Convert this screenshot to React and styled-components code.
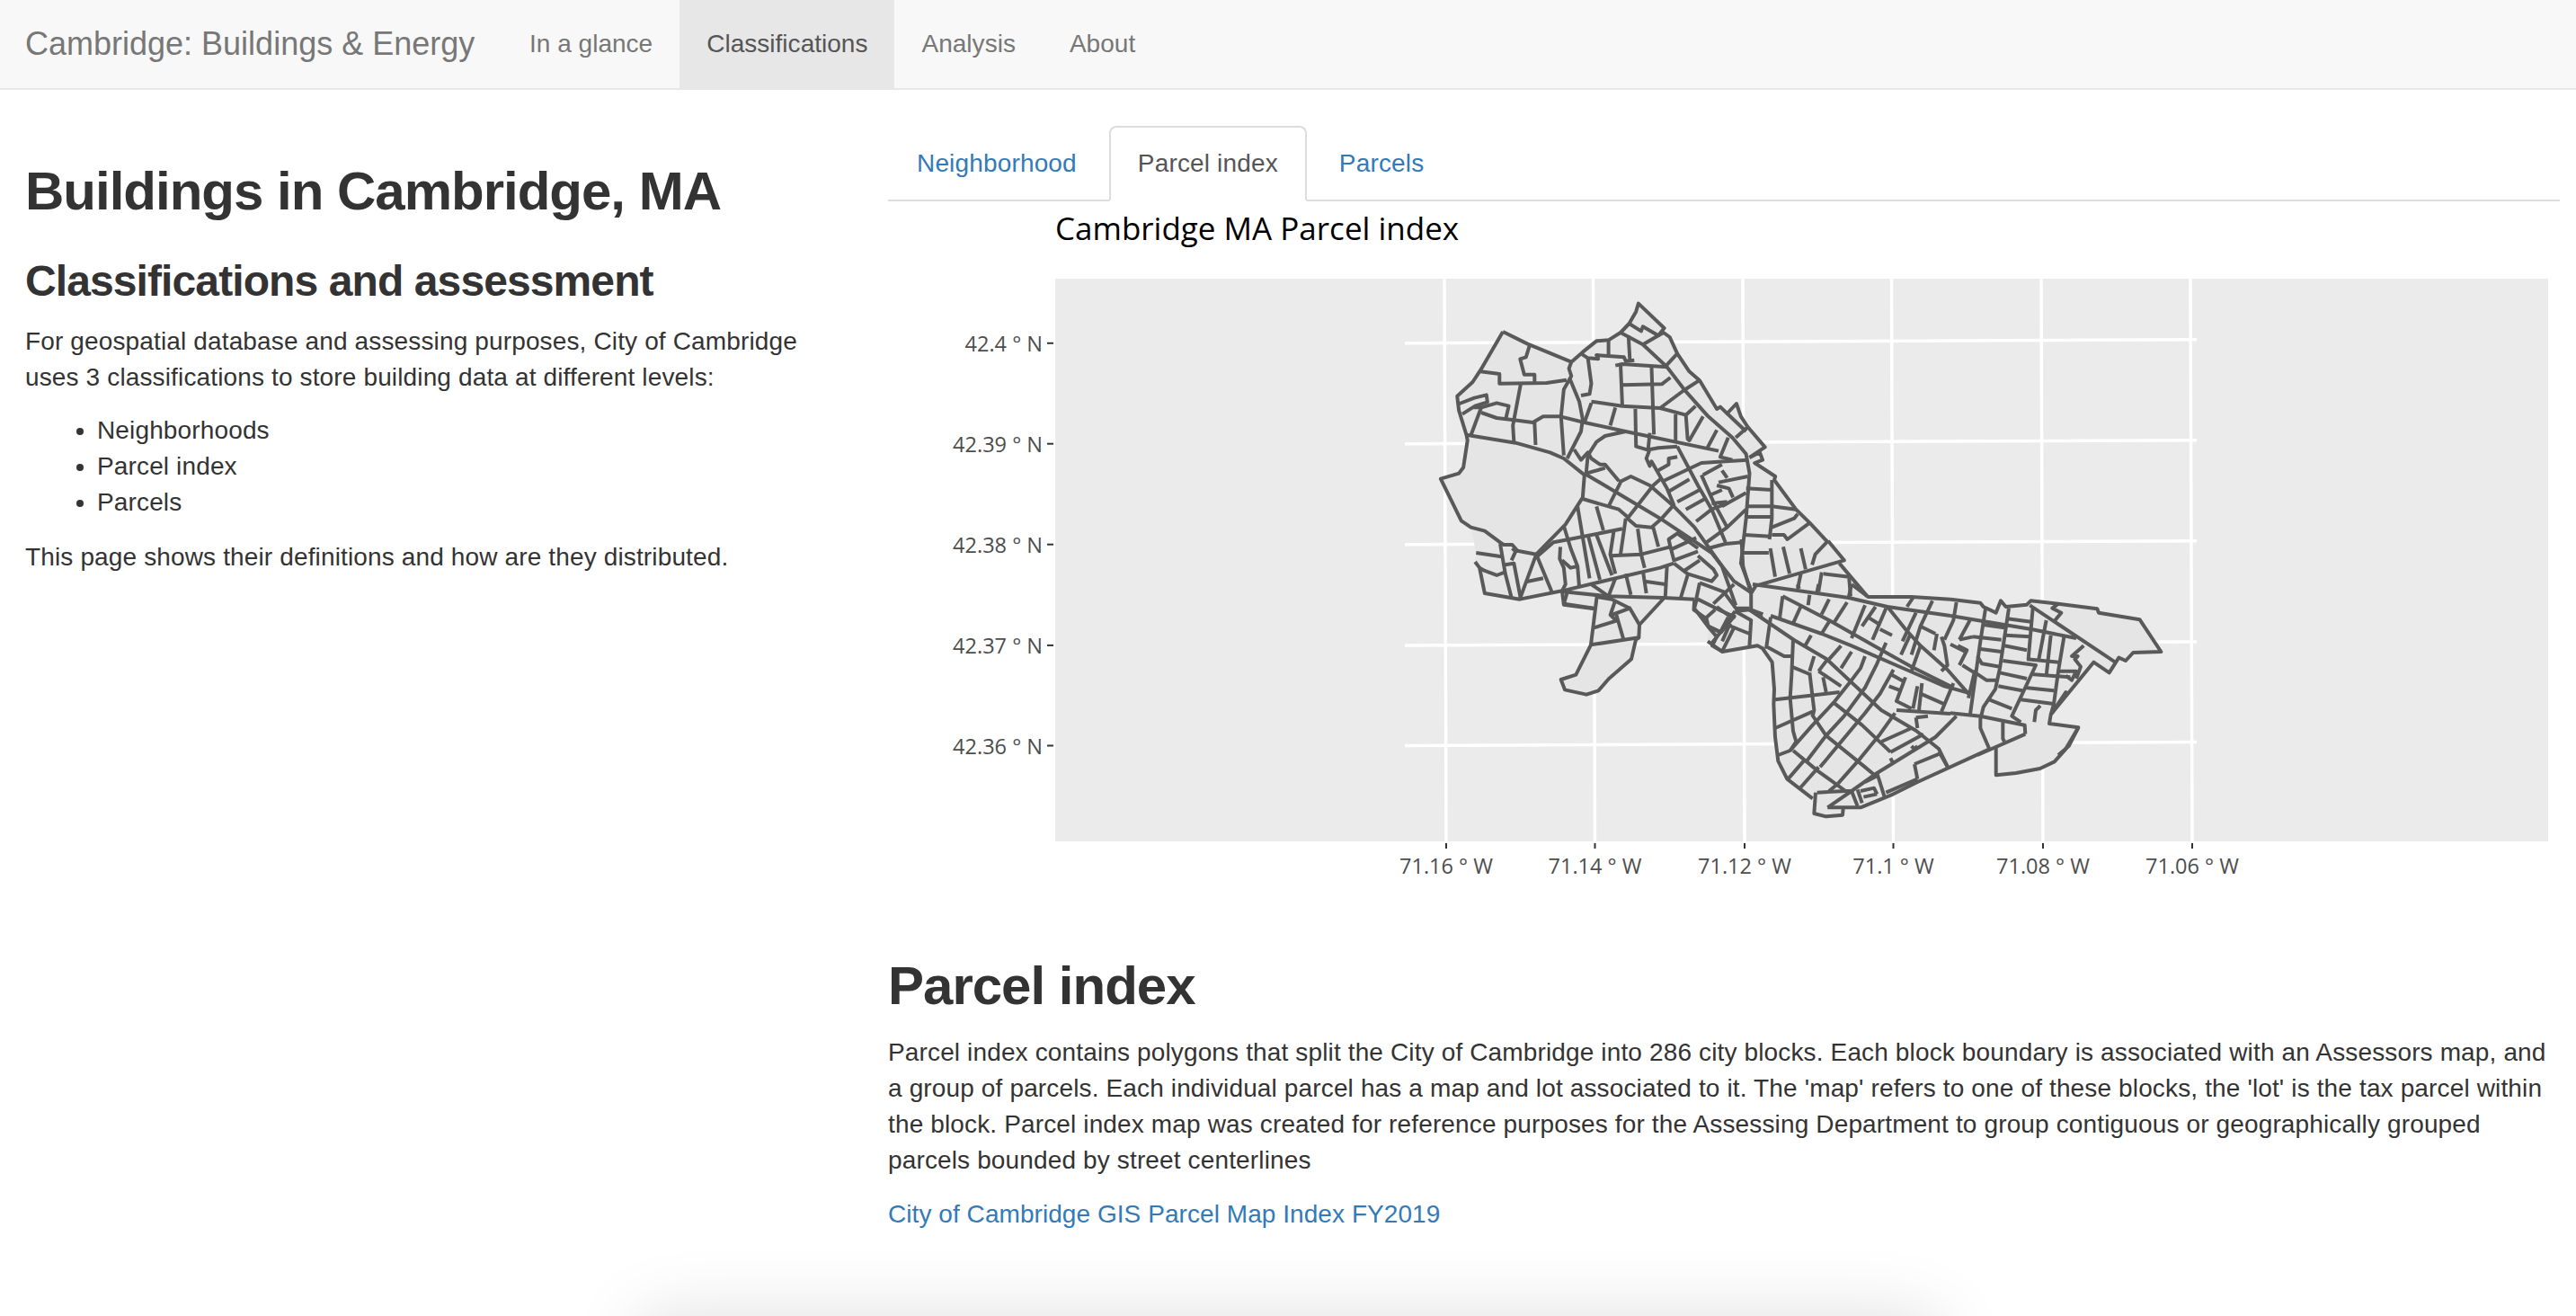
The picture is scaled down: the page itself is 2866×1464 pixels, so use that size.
import React from "react";
import styled, { createGlobalStyle } from "styled-components";

const GlobalStyle = createGlobalStyle`
  html, body {
    margin: 0;
    padding: 0;
    height: 100%;
    overflow: hidden;
    background: #fff;
    color: #333;
    font-family: "Liberation Sans", Arial, sans-serif;
    font-size: 28px;
    line-height: 40px;
    letter-spacing: 0.14px;
  }
  * { box-sizing: border-box; }
`;

const NAV_ITEMS = ["In a glance", "Classifications", "Analysis", "About"];
const TABS = ["Neighborhood", "Parcel index", "Parcels"];
const LAT_TICKS = [["42.4 ° N", 381.8], ["42.39 ° N", 493.7], ["42.38 ° N", 605.7], ["42.37 ° N", 717.9], ["42.36 ° N", 829.5]];
const LON_TICKS = [["71.16 ° W", 1609], ["71.14 ° W", 1774.5], ["71.12 ° W", 1941], ["71.1 ° W", 2106.5], ["71.08 ° W", 2273], ["71.06 ° W", 2439]];

// traced from crops of the map, in crop pixels
const NORTH_FILL =
  "293,177 365,218 492,278 525,245 565,208 600,205 635,180 660,150 680,110 687,83 762,165 745,190 760,180 778,195 800,250 835,310 865,340 915,435 925,428 945,450 972,417 985,460 1005,495 1055,562 1010,597 1040,580 1048,605 1025,615 1085,660 1082,672 1145,770 1185,815 1238,880 1288,938 1268,950 1352,1062 1490,1062 1568,1070 1568,1200 948,1200 925,1180 890,1160 885,1135 848,1105 850,1070 760,1065 690,1150 690,1200 555,1200 560,1102 470,1088 465,1042 342,1070 240,1050 225,965 212,945 215,915 200,830 172,808 112,668 165,650 178,630 190,540 187,522 165,440 160,392 205,345 228,305";
const NORTH_LINES = [
  "293,177 365,218 492,278",
  "293,177 228,305 205,345 160,392 165,440 187,522 190,540 178,630 165,650 112,668 172,808 200,830 240,842 285,880 295,888 320,888 335,908 390,920",
  "492,278 525,245 565,208 600,205 635,180 660,150 680,110 687,83 762,165 745,190",
  "745,190 760,180 778,195 800,250 835,310 865,340 915,435 925,428 945,450 972,417 985,460 1005,495 1055,562 1010,597",
  "1010,597 1040,580 1048,605 1025,615 1085,660 1082,672 1145,770 1185,815 1238,880",
  "228,310 283,318 283,350 420,348 478,338",
  "370,225 360,262 343,268 355,320 385,320 385,348",
  "345,350 322,490 325,545",
  "160,420 210,398 245,388 248,412 212,425 175,452",
  "207,430 230,430 275,415 310,425 302,465",
  "230,430 200,522",
  "230,447 275,465 325,472 380,480 410,460 460,460",
  "190,522 330,548 430,580 470,600 530,655 525,730 475,820 390,920",
  "385,480 388,555",
  "492,278 485,300 492,325 470,370 462,460 470,590",
  "488,335 515,410 525,470 520,510 480,600",
  "460,460 530,480 650,510 920,575",
  "520,250 540,265 570,268 565,255 645,262 650,275 675,272",
  "540,265 550,350 545,385 520,390",
  "600,205 600,255",
  "658,190 662,270",
  "635,180 700,220 770,295 820,370 890,460 960,530 1000,585 1010,650 1000,800 985,950 1018,1050",
  "620,290 640,285 770,295",
  "635,285 640,420",
  "725,290 732,520",
  "640,355 755,352 780,330",
  "550,410 640,425 750,432 825,455",
  "800,250 768,290",
  "863,340 820,372 750,432",
  "853,425 825,455 830,535 835,540 875,460",
  "620,430 605,490",
  "550,415 530,480",
  "678,435 680,560 715,572 720,515",
  "795,452 795,548",
  "915,505 885,570",
  "948,530 925,595 960,605",
  "945,450 1000,510",
  "1003,497 970,530",
  "660,150 695,175 700,160 730,180 745,190 700,220",
  "650,510 590,525 565,545 540,590 535,650",
  "500,570 520,605 540,580 550,600 575,620 590,620 630,675",
  "535,650 590,632",
  "530,650 750,800 900,915 965,1010 1018,1050",
  "635,680 600,760",
  "525,735 600,760 630,770 655,795",
  "630,680 665,660 720,690 790,760 850,830 930,960 970,1090",
  "800,560 745,565 720,570 710,600 720,625 725,610 770,700 790,755 755,800 725,830 680,825 655,800 730,690 750,670",
  "800,560 860,690 900,770 940,880",
  "745,640 775,620 775,600 800,595",
  "760,675 870,615 940,610 1005,605",
  "775,710 835,670",
  "800,745 865,705",
  "825,770 880,735",
  "875,655 930,620",
  "930,640 945,665",
  "870,655 905,745 945,830",
  "920,680 1005,660",
  "915,690 950,700 962,730",
  "900,720 930,705",
  "900,750 945,745",
  "930,760 1000,715",
  "855,810 900,770 945,750",
  "885,880 945,830 1000,770",
  "890,900 940,885 990,880",
  "1000,700 1075,705",
  "1005,760 1075,760 1145,770",
  "1000,795 1075,795",
  "995,855 1070,860",
  "1075,672 1075,800 1068,870",
  "1075,830 1140,800 1150,785",
  "1075,855 1110,855 1120,870 1185,815",
  "215,915 290,928",
  "285,885 300,985 318,1065",
  "300,955 325,950 345,1070",
  "320,900 330,910 318,940",
  "225,965 240,975 275,990 298,980",
  "212,945 225,965 240,1050 342,1070 465,1042 470,1088 560,1102",
  "342,1070 390,920 435,1045",
  "360,1012 410,1000",
  "395,925 440,880 485,870 640,835",
  "470,825 490,900 510,960 515,1030",
  "510,760 545,1000",
  "565,760 585,840",
  "540,855 575,1005",
  "565,855 610,990",
  "615,845 605,920 620,985",
  "650,800 635,920",
  "605,925 695,920 780,895 790,940 860,910",
  "685,835 695,920 705,965",
  "730,830 745,895",
  "780,895 775,870 800,850 860,900",
  "780,905 855,865",
  "465,1042 750,965 790,950",
  "460,895 458,935 470,965 475,1020 465,1042",
  "465,940 490,965 510,960",
  "790,950 830,985 900,1010 915,990 905,970 860,925",
  "820,975 865,940",
  "770,960 765,1065",
  "470,1045 600,1060 760,1065 850,1070",
  "550,1020 600,1060",
  "620,1000 600,1060",
  "650,985 665,1055",
  "700,975 710,1050",
  "705,1010 765,1020",
  "830,990 810,1065",
  "865,1015 855,1070",
  "865,1015 935,1045 970,1100 1010,1100",
  "860,1070 930,1110 970,1130",
  "905,1085 965,1020",
  "850,1070 848,1105 885,1135 890,1160 925,1180 948,1130",
  "885,1130 910,1105",
];

const ISLAND_FILL =
  "270,172 220,272 170,288 183,322 255,338 295,325 330,285 405,220 420,155 430,148 432,105 515,15 520,0 180,0 180,35 280,50";
const CORNER_FILL = "625,15 615,50 660,110 690,145 675,175 710,195 800,180 800,0 625,0";
const ISLAND_LINES = [
  "270,172 220,272 170,288 183,322 255,338 295,325 330,285 405,220 420,155",
  "270,172 430,148",
  "280,115 355,92 335,72 350,28",
  "290,10 270,172",
  "380,158 355,72",
  "340,72 400,50 432,105 430,148 420,155",
  "180,35 280,50",
  "180,35 190,0",
  "432,105 515,15",
  "290,12 340,20 400,50",
  "625,15 615,50 660,110 690,145 675,175 710,195",
  "660,110 705,130 750,75",
  "690,45 745,85",
  "710,190 750,110",
];

const SOUTH_FILL =
  "0,0 375,0 425,70 410,80 497,190 640,188 850,212 858,222 895,245 912,203 930,232 1000,222 1005,205 1090,215 1210,230 1215,245 1347,266 1412,372 1325,378 1300,405 1278,397 1250,447 1205,410 1070,590 1072,620 1155,627 1115,700 1080,742 1035,765 960,780 898,787 898,695 875,705 750,765 655,810 530,880 470,897 423,905 422,918 375,925 333,920 340,850 325,865 250,810 225,770 215,720 203,620 205,450 180,380 155,355 45,375 0,340";
const SOUTH_LINES = [
  "0,340 45,375 155,355 168,362",
  "898,695 898,787 960,780 1035,765 1080,742 1115,700 1155,627",
  "375,5 425,70 150,155 135,180 135,235",
  "410,80 497,190",
  "195,30 210,125",
  "235,25 255,115",
  "290,30 305,100",
  "105,0 110,90 135,180",
  "110,45 190,45",
  "325,85 335,50 375,5",
  "360,115 440,125 445,190",
  "290,115 280,165",
  "355,110 345,175",
  "85,240 130,235",
  "85,240 40,310 10,350",
  "85,240 135,270 130,355",
  "70,280 45,340",
  "60,285 130,315",
  "130,235 170,262",
  "135,235 172,250",
];

const BLOCKS_LINES = [
  "-30,0 290,45 420,75 630,105",
  "300,0 355,42 500,42 630,50",
  "70,40 225,120 410,225 500,275 640,345",
  "30,105 200,165 300,205 483,285 610,340 699,365",
  "-42,84 108,186 216,249 399,420 516,489 591,549 622,612",
  "420,75 480,150 530,205 620,285 690,365",
  "450,420 630,432",
  "0,210 35,260 42,350 40,400 45,510 55,590 85,650 170,715",
  "180,695 175,765 215,775 270,770 272,750",
  "220,745 300,690 385,630 580,510 650,440",
  "220,745 330,745 440,700 520,660 760,550",
  "185,695 280,690 300,690",
  "70,40 60,115",
  "30,110 15,215",
  "130,75 105,130",
  "160,35 155,70",
  "225,50 200,100",
  "285,60 240,130",
  "345,70 300,180",
  "380,75 335,140",
  "415,80 370,185",
  "120,0 125,15",
  "190,0 185,25",
  "300,0 290,45",
  "505,45 485,75",
  "570,55 530,140 500,235",
  "650,60 640,120 610,185",
  "515,95 470,190",
  "355,110 395,135",
  "395,150 435,170",
  "530,140 580,165",
  "585,165 575,220",
  "600,175 610,205 620,270 600,290",
  "530,205 500,290",
  "495,170 465,235",
  "225,125 200,165",
  "165,170 145,205",
  "265,205 225,250",
  "300,225 265,280",
  "95,555 170,470 240,395 300,320 330,280 345,240",
  "150,590 215,505 275,440 345,345 385,265 415,195",
  "195,610 270,520 345,430 395,365 440,285",
  "255,665 330,580 395,500 445,430",
  "88,650 140,590",
  "130,678 190,610",
  "225,690 255,665",
  "240,395 335,470 430,560",
  "168,435 215,505 345,610 375,635",
  "105,555 190,625 280,690",
  "105,185 100,300 95,380 105,490 115,525 95,555 55,570",
  "45,385 260,360",
  "100,275 160,300",
  "45,480 170,425",
  "160,295 175,420 170,440",
  "190,290 265,340",
  "205,310 215,360",
  "175,240 160,290",
  "220,250 190,290",
  "20,210 75,240 100,240",
  "520,340 505,415",
  "535,330 525,420",
  "480,310 450,390 500,415",
  "430,300 475,325",
  "425,340 465,355",
  "530,365 610,400",
  "640,330 600,425",
  "515,445 555,440",
  "515,445 520,480",
  "400,525 500,480",
  "430,560 540,500",
  "430,580 440,600",
  "510,600 595,565 622,612",
  "510,600 520,650",
  "500,540 510,550 520,540",
  "300,690 320,740",
  "385,630 410,710",
  "320,685 335,730",
  "330,690 375,680 385,700",
  "340,710 385,700",
  "415,695 520,650",
  "345,660 385,640",
];

const EAST_LINES = [
  "0,80 100,92 110,105 152,125 168,85 185,105 255,98 268,85 360,95 490,112 495,125 632,148 703,255 610,258 585,285 562,275 530,325 478,290 335,465 330,495 427,508 395,570 360,600",
  "250,530 248,500 100,470 0,460",
  "250,530 90,600",
  "0,135 180,165 270,180 420,210",
  "265,100 550,290",
  "118,105 100,220 65,470",
  "195,110 165,310 150,380 110,440 100,480 100,510 130,580",
  "275,110 260,280",
  "320,150 295,280",
  "110,165 180,175",
  "75,205 170,215",
  "190,145 270,155",
  "185,200 265,205",
  "95,245 170,255",
  "180,235 255,250",
  "175,285 285,300 205,470 235,490",
  "255,280 360,290",
  "165,325 255,345",
  "270,330 400,340",
  "160,370 240,385",
  "250,375 345,385",
  "235,415 350,430",
  "335,200 320,335",
  "380,200 360,320 345,430 335,465",
  "445,235 405,270 425,270 415,280 435,305 420,345",
  "360,320 420,320 405,350 385,335",
  "345,450 385,390 395,395",
  "300,435 285,450 280,490",
  "175,490 175,545 180,555",
  "90,270 105,295 165,305",
  "75,320 120,350 155,350",
  "130,415 205,445",
  "40,300 80,325 60,410",
  "30,300 55,250 25,235",
  "65,150 30,215",
  "0,230 50,255",
  "30,215 75,205",
  "360,95 340,110 370,125 345,155",
];

function ParcelMap() {
  return (
    <ChartSvg width="1860" height="800" viewBox="988 224 1860 800">
      <ChartTitle x="1174" y="267">Cambridge MA Parcel index</ChartTitle>
      <rect x="1174" y="310" width="1661" height="626" fill="#ebebeb" />
      {LAT_TICKS.map(([label, y]) => (
        <g key={label}>
          <GridLine x1="1563" y1={y} x2="2444" y2={y - 4} />
          <TickMark x1="1165" y1={y} x2="1172" y2={y} />
          <AxisLabel x="1160" y={y + 9} textAnchor="end">{label}</AxisLabel>
        </g>
      ))}
      {LON_TICKS.map(([label, x]) => (
        <g key={label}>
          <GridLine x1={x - 2} y1="310" x2={x} y2="936" />
          <TickMark x1={x} y1="938" x2={x} y2="944" />
          <AxisLabel x={x} y="972" textAnchor="middle">{label}</AxisLabel>
        </g>
      ))}
      <g transform="translate(1560 310) scale(0.38265 0.33333)">
        <Land points={NORTH_FILL} />
      </g>
      <g transform="translate(1680 660) scale(0.33333)">
        <Land points={ISLAND_FILL} />
        <Land points={CORNER_FILL} />
      </g>
      <g transform="translate(1900 600) scale(0.35714 0.33333)">
        <Land points={SOUTH_FILL} />
      </g>
      <g transform="translate(1560 310) scale(0.38265 0.33333)">
        {NORTH_LINES.map((pts) => <Boundary key={pts} points={pts} />)}
      </g>
      <g transform="translate(1680 660) scale(0.33333)">
        {ISLAND_LINES.map((pts) => <Boundary key={pts} points={pts} />)}
      </g>
      <g transform="translate(1900 600) scale(0.35714 0.33333)">
        {SOUTH_LINES.map((pts) => <Boundary key={pts} points={pts} />)}
      </g>
      <g transform="translate(1960 650) scale(0.33333)">
        {BLOCKS_LINES.map((pts) => <Boundary key={pts} points={pts} />)}
      </g>
      <g transform="translate(2170 640) scale(0.33333)">
        {EAST_LINES.map((pts) => <Boundary key={pts} points={pts} />)}
      </g>
    </ChartSvg>
  );
}

export default function App() {
  return (
    <>
      <GlobalStyle />
      <Navbar>
        <Brand>Cambridge: Buildings &amp; Energy</Brand>
        {NAV_ITEMS.map((item) => (
          <NavLink key={item} $active={item === "Classifications"}>{item}</NavLink>
        ))}
      </Navbar>
      <Layout>
        <Sidebar>
          <Heading>Buildings in Cambridge, MA</Heading>
          <SubHeading>Classifications and assessment</SubHeading>
          <Paragraph>
            For geospatial database and assessing purposes, City of Cambridge uses 3
            classifications to store building data at different levels:
          </Paragraph>
          <BulletList>
            <li>Neighborhoods</li>
            <li>Parcel index</li>
            <li>Parcels</li>
          </BulletList>
          <Paragraph>This page shows their definitions and how are they distributed.</Paragraph>
        </Sidebar>
        <Main>
          <TabBar>
            {TABS.map((tab) => (
              <Tab key={tab} $active={tab === "Parcel index"}>{tab}</Tab>
            ))}
          </TabBar>
          <ParcelMap />
          <Heading>Parcel index</Heading>
          <Paragraph>
            Parcel index contains polygons that split the City of Cambridge into 286 city
            blocks. Each block boundary is associated with an Assessors map, and a group of
            parcels. Each individual parcel has a map and lot associated to it. The 'map'
            refers to one of these blocks, the 'lot' is the tax parcel within the block. Parcel
            index map was created for reference purposes for the Assessing Department to group
            contiguous or geographically grouped parcels bounded by street centerlines
          </Paragraph>
          <Paragraph>
            <TextLink>City of Cambridge GIS Parcel Map Index FY2019</TextLink>
          </Paragraph>
        </Main>
      </Layout>
      <DockShadow />
    </>
  );
}

const Navbar = styled.nav`
  display: flex;
  height: 100px;
  margin-bottom: 40px;
  background: #f8f8f8;
  border-bottom: 2px solid #e7e7e7;
`;
const Brand = styled.a`
  width: 559px;
  padding-left: 28px;
  font-size: 36px;
  line-height: 98px;
  letter-spacing: 0;
  color: #777;
`;
const NavLink = styled.a`
  padding: 0 30px;
  line-height: 98px;
  letter-spacing: 0.02px;
  color: ${(p) => (p.$active ? "#555" : "#777")};
  background: ${(p) => (p.$active ? "#e7e7e7" : "transparent")};
`;
const Layout = styled.div`
  display: grid;
  grid-template-columns: 988px 1860px;
`;
const Sidebar = styled.aside`
  padding: 0 58px 0 28px;
`;
const Main = styled.main`
  min-width: 0;
`;
const Heading = styled.h2`
  margin: 40px 0 20px;
  font-size: 60px;
  line-height: 66px;
  font-weight: 700;
  letter-spacing: -1px;
  color: #333;
`;
const SubHeading = styled.h3`
  margin: 40px 0 20px;
  font-size: 48px;
  line-height: 52px;
  font-weight: 700;
  letter-spacing: -0.9px;
  color: #333;
  padding-top: 1px;
`;
const Paragraph = styled.p`
  padding-top: 1px;
  margin: 0 0 19px;
`;
const BulletList = styled.ul`
  margin: 0 0 20px;
  padding-left: 80px;
`;
const TabBar = styled.div`
  display: flex;
  height: 84px;
  border-bottom: 2px solid #ddd;
`;
const Tab = styled.a`
  height: 84px;
  margin-right: 4px;
  padding: 20px 30px;
  letter-spacing: 0.16px;
  border: 2px solid ${(p) => (p.$active ? "#ddd" : "transparent")};
  border-bottom-color: ${(p) => (p.$active ? "#fff" : "transparent")};
  border-radius: 8px 8px 0 0;
  background: ${(p) => (p.$active ? "#fff" : "transparent")};
  color: ${(p) => (p.$active ? "#555" : "#337ab7")};
`;
const ChartSvg = styled.svg`
  display: block;
`;
const ChartTitle = styled.text`
  font-family: "Open Sans", sans-serif;
  font-size: 35px;
  letter-spacing: 0;
  fill: #000;
`;
const AxisLabel = styled.text`
  font-family: "Open Sans", sans-serif;
  font-size: 23.5px;
  letter-spacing: 0;
  fill: #4d4d4d;
`;
const GridLine = styled.line`
  stroke: #fff;
  stroke-width: 3.5;
`;
const TickMark = styled.line`
  stroke: #333;
  stroke-width: 2;
`;
const Land = styled.polygon`
  fill: #e5e5e5;
`;
const Boundary = styled.polyline`
  fill: none;
  stroke: #595959;
  stroke-width: 4;
  stroke-linejoin: round;
  vector-effect: non-scaling-stroke;
`;
const TextLink = styled.a`
  color: #337ab7;
  letter-spacing: 0.06px;
`;
const DockShadow = styled.div`
  position: fixed;
  top: 100vh;
  left: 708px;
  width: 1452px;
  height: 100px;
  border-radius: 30px;
  box-shadow: 0 0 80px rgba(0, 0, 0, 0.13);
`;
